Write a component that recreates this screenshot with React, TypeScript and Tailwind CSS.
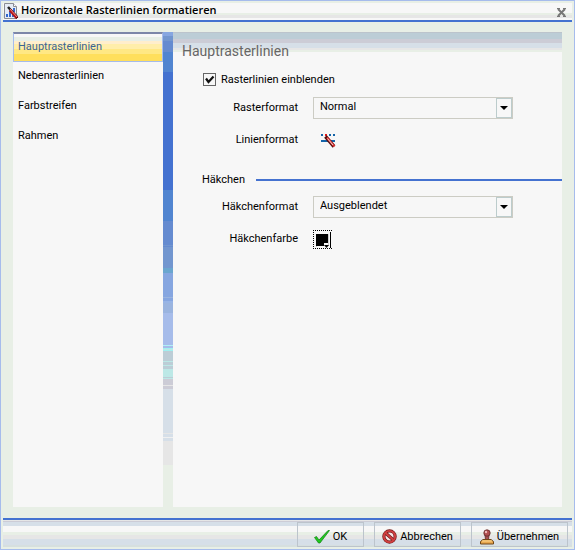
import { FC, ReactNode, useState } from 'react';
import clsx from 'clsx';

const pages = ['Hauptrasterlinien', 'Nebenrasterlinien', 'Farbstreifen', 'Rahmen'];

const ChartEditIcon = () => (
  <svg width="17" height="17" viewBox="0 0 17 17" className="shrink-0" aria-hidden="true">
    <path d="M1.500 .5h9l3 3v12h-12z" fill="#e6ecf6" stroke="#8a8d94" />
    <path d="M10.500 .5v3h3" fill="#fff" stroke="#8a8d94" />
    <path d="M3 11h2v3H3zM6 8h2v6H6zM9 11h2v3H9zM10 5h2v4h-2z" fill="#3468cc" />
    <path d="M5 4l9 10" stroke="#222" strokeWidth="2.500" />
    <path d="M7 7l7 8" stroke="#b41414" strokeWidth="3" />
    <path d="M7 6l7 8" stroke="#e88" strokeWidth="1" />
    <path d="M13 15.500l2-1.500" stroke="#400" strokeWidth="1" />
  </svg>
);

const LineStyleIcon = () => (
  <svg width="16" height="15" viewBox="0 0 16 15" aria-hidden="true">
    <path d="M0 0h2v2H0zM8 0h2v2H8zM12 0h2v2h-2z" fill="#1464a8" />
    <path d="M0 6h14v2H0z" fill="#1464a8" />
    <path d="M4 0h2v2H4z" fill="#e01818" />
    <path d="M4.500 2.500L13 12.500" stroke="#501010" strokeWidth="3.500" />
    <path d="M6 3.500l7.500 9" stroke="#d83030" strokeWidth="2" />
    <path d="M6.500 4.500l5.500 6.500" stroke="#f0d0d0" strokeWidth="1" />
  </svg>
);

const CheckIcon = () => (
  <svg width="16" height="14" viewBox="0 0 16 14" aria-hidden="true">
    <path d="M.5 7.500l2-1 2.500 3.500L14 .5h1.500L6 13H4.500z" fill="#20c820" stroke="#108010" strokeWidth=".7" />
  </svg>
);

const CancelIcon = () => (
  <svg width="15" height="15" viewBox="0 0 16 16" aria-hidden="true">
    <circle cx="8" cy="8" r="6" fill="#f6e6e6" stroke="#701818" strokeWidth="3.400" />
    <path d="M3.500 4l9 8" stroke="#701818" strokeWidth="3.400" />
    <circle cx="8" cy="8" r="6" fill="none" stroke="#d04040" strokeWidth="2" />
    <path d="M3.500 4l9 8" stroke="#d04040" strokeWidth="2" />
  </svg>
);

const StampIcon = () => (
  <svg width="14" height="16" viewBox="0 0 14 16" aria-hidden="true">
    <path d="M5 6h4l-.5 5h-3z" fill="#a85050" stroke="#602828" strokeWidth=".8" />
    <circle cx="7" cy="4" r="3.200" fill="#b05050" stroke="#602828" strokeWidth=".8" />
    <circle cx="6" cy="3" r="1.200" fill="#f0b8b8" />
    <path d="M.5 12.500L3 10.500h8l2.500 2v2.500H.5z" fill="#e8a850" stroke="#704818" />
    <path d="M2 12h10" stroke="#fbd890" />
  </svg>
);

// colour bands between the navigation and the form, top to bottom
const Stripe = () => (
  <div className="w-[10px] shrink-0 bg-[#e8efe6] bg-[linear-gradient(#86a6e0_4px,#7296cf_4px_9px,#658bd0_9px_20px,#5185d0_20px_40px,#4472d0_40px_158px,#5185d0_158px_189px,#658bd0_189px_213px,#7296cf_213px_214px,#658bd0_214px_215px,#7296cf_215px_236px,#6aa6cf_236px_241px,#86a6e0_241px_265px,#9ab4df_265px_266px,#86a6e0_266px_269px,#97b4e6_269px_271px,#9ab4df_271px_281px,#a6bcea_281px_313px,#b0f0f6_313px_314px,#a6bcea_314px_316px,#a0f0f0_316px_317px,#bce8e6_317px_318px,#a0f0f0_318px_319px,#bccdd6_319px_329px,#bce8e6_329px_330px,#bccdd6_330px_333px,#bce8e6_333px_334px,#bccdd6_334px_337px,#bce8e6_337px_345px,#bccdd6_345px_346px,#bce8e6_346px_347px,#ccccd6_347px_353px,#e6e6e6_353px_354px,#ccccd6_354px_357px,#d6dfe8_357px_401px,#e6e6e6_401px_402px,#d6dfe8_402px_405px,#f0f0f0_405px_406px,#d6dfe8_406px_409px,#e6e6e6_409px_433px,#e8efe6_433px)]" />
);

const FieldRow: FC<{ id: string; label: string; children: ReactNode }> = ({ id, label, children }) => (
  <div className="flex h-[22px] items-center">
    <label htmlFor={id} className="w-[125px] text-right">{label}</label>
    <div className="ml-[15px] flex items-center">{children}</div>
  </div>
);

const SelectBox: FC<{ id: string; options: string[] }> = ({ id, options }) => (
  <div className="relative">
    <select
      id={id}
      className="block h-[22px] w-[200px] appearance-none border border-[#ccccc4] bg-[#f7f7f7] pb-[2px] pl-[6px] outline-none"
    >
      {options.map((option) => (
        <option key={option}>{option}</option>
      ))}
    </select>
    <span className="pointer-events-none absolute top-px right-px flex h-5 w-4 items-center justify-center border border-[#bccccc] bg-[#f7f7f7]">
      <svg width="8" height="4" viewBox="0 0 8 4" aria-hidden="true">
        <path d="M0 0h8L4 4z" />
      </svg>
    </span>
  </div>
);

const DialogButton: FC<{ icon: ReactNode; className: string; children: ReactNode }> = ({ icon, className, children }) => (
  <button type="button" className={clsx('flex h-[25px] items-center justify-center gap-[3px] border border-[#bcc4cc] pt-1', className)}>
    {icon}
    {children}
  </button>
);

const App = () => {
  const [active, setActive] = useState(pages[0]);
  const [visible, setVisible] = useState(true);

  return (
    <div className="flex min-h-screen flex-col border border-[#a6bcec] bg-[#e8efe6] p-[2px] font-[Roboto,'Noto_Sans',sans-serif] text-[11px] leading-4 text-black">
      <header className="flex h-[19px] items-center border-b-2 border-[#4472d0] bg-[linear-gradient(#f7f7f7_10px,#e8efe6_10px_12px,#e6e6e6_12px_15px,#f7f7f7_15px)]">
        <ChartEditIcon />
        <h1 className="grow pb-[3px] pl-px font-['Open_Sans','Noto_Sans',sans-serif] font-semibold">
          Horizontale Rasterlinien formatieren
        </h1>
        <button type="button" aria-label="Schließen" className="mr-[6px] pt-[2px]">
          <svg width="9" height="9" viewBox="0 0 9 9" aria-hidden="true">
            <path d="M1 1l7 7M8 1L1 8" stroke="#777" strokeWidth="2" />
            <path d="M0 .5h3M6 .5h3M0 8.500h3M6 8.500h3" stroke="#777" />
          </svg>
        </button>
      </header>

      <div className="flex grow px-[10px] pt-[10px] pb-[11px]">
        <nav className="w-[150px] shrink-0 bg-[#f7f7f7]">
          {pages.map((page) => (
            <button
              key={page}
              type="button"
              onClick={() => setActive(page)}
              className={clsx(
                'block h-[30px] w-full pb-[2px] text-left',
                page === active
                  ? 'border border-t-2 border-[#a6bcec] border-t-[#7c86a8] bg-[linear-gradient(#f7f7f7_3px,#e8efe6_3px_7px,#ffeecc_7px_10px,#ffeeaa_10px_15px,#ffe884_15px_20px,#ffdf5c_20px)] pl-1 text-[#3c6496]'
                  : 'pl-[5px]'
              )}
            >
              {page}
            </button>
          ))}
        </nav>
        <Stripe />
        <main className="grow bg-[#f7f7f7] bg-[linear-gradient(#bcc4cc_1px,#bccdd6_1px_7px,#ccccd6_7px_11px,#d6dfe8_11px_16px,#e6e6e6_16px_18px,#e8efe6_18px_20px,#f7f7f7_20px)] pt-[9px]">
          <h2 className="pl-[9px] text-[14px] leading-5 text-[#666]">Hauptrasterlinien</h2>
          <div className="mt-[10px] flex h-4 items-center pl-[30px]">
            <span className="relative flex">
              <input
                id="show"
                type="checkbox"
                checked={visible}
                onChange={(e) => setVisible(e.target.checked)}
                className="h-[13px] w-[13px] appearance-none border border-[#666] bg-[#f7f7f7]"
              />
              {visible && (
                <svg width="13" height="13" viewBox="0 0 13 13" className="pointer-events-none absolute" aria-hidden="true">
                  <path d="M3 5.500l2.500 3.500L10.500 3.500" fill="none" stroke="#111" strokeWidth="2.200" />
                </svg>
              )}
            </span>
            <label htmlFor="show" className="pt-[2px] pl-[5px]">Rasterlinien einblenden</label>
          </div>
          <div className="mt-[10px] flex flex-col gap-[10px]">
            <FieldRow id="grid" label="Rasterformat">
              <SelectBox id="grid" options={['Normal', 'Gepunktet', 'Ausgeblendet']} />
            </FieldRow>
            <FieldRow id="line" label="Linienformat">
              <button id="line" type="button" className="ml-2 pt-[2px]">
                <LineStyleIcon />
              </button>
            </FieldRow>
          </div>
          <div className="mt-[19px] flex h-5 items-center pl-[29px]">
            <h3>Häkchen</h3>
            <div className="ml-[11px] h-[2px] grow bg-[#4472d0]" />
          </div>
          <div className="mt-[6px] flex flex-col gap-[10px]">
            <FieldRow id="tick" label="Häkchenformat">
              <SelectBox id="tick" options={['Ausgeblendet', 'Innen', 'Außen']} />
            </FieldRow>
            <FieldRow id="color" label="Häkchenfarbe">
              <button id="color" type="button" className="block">
                <svg width="19" height="19" viewBox="0 0 19 19" aria-hidden="true">
                  <path d="M0 .5h19M.5 0v19M0 18.500h19" stroke="#000" strokeDasharray="1 1" />
                  <path d="M17.500 2v16" stroke="#000" strokeWidth="1" />
                  <path d="M3.500 17V4.500h12V16" fill="none" stroke="#ccc" />
                  <path d="M3 4h12v9h-4v3H3z" />
                  <path d="M11 15h5l-2.500 3z" />
                </svg>
              </button>
            </FieldRow>
          </div>
        </main>
      </div>

      <footer className="flex h-[29px] justify-end gap-[10px] border-t-2 border-[#4472d0] bg-[linear-gradient(#e6e6e6_1px,#ccccd6_1px_2px,#d6dfe8_2px_6px,#f7f7f7_6px_12px,#e8efe6_12px_15px,#e6e6e6_15px_19px,#d6dfe8_19px_25px,#d6dfdf_25px)] pt-[2px] pr-1">
        <DialogButton icon={<CheckIcon />} className="w-[67px]">OK</DialogButton>
        <DialogButton icon={<CancelIcon />} className="w-[87px]">Abbrechen</DialogButton>
        <DialogButton icon={<StampIcon />} className="w-[97px]">Übernehmen</DialogButton>
      </footer>
    </div>
  );
};

export default App;
